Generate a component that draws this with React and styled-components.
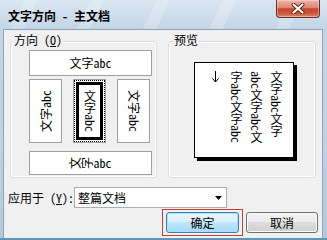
import React from 'react';
import styled, { createGlobalStyle, css } from 'styled-components';

const FONT = `"Noto Sans Mono CJK SC", "Noto Sans CJK SC", "DejaVu Sans", sans-serif`;

const Global = createGlobalStyle`
  html, body { margin: 0; padding: 0; }
  body { width: 327px; height: 240px; overflow: hidden; background: #1b2a38; font-family: ${FONT}; }
  * { box-sizing: border-box; }
`;

const Window = styled.div`
  width: 327px;
  height: 240px;
  display: flex;
  flex-direction: column;
  overflow: hidden;
  background: linear-gradient(180deg, #dae6f1 0%, #c3d5e6 29px, #bfd1e3 60%, #b4c9dd calc(100% - 2px), #5f97b6 calc(100% - 2px));
`;

const TitleBar = styled.div`
  flex: 0 0 29px;
  display: flex;
  align-items: flex-start;
  background: repeating-linear-gradient(115deg, rgba(255,255,255,0) 0 22px, rgba(255,255,255,0.22) 22px 34px, rgba(255,255,255,0) 34px 60px);
`;

const Title = styled.div`
  margin: 9px 0 0 8px;
  font-weight: bold;
  font-size: 12px;
  line-height: 14px;
  color: #000;
  white-space: pre;
`;

const CloseButton = styled.div`
  margin-left: auto;
  margin-right: 7px;
  width: 44px;
  height: 18px;
  border: 1px solid #6e2b22;
  border-top: none;
  border-radius: 0 0 4px 4px;
  background: linear-gradient(180deg, #ebb6aa 0%, #dd8472 45%, #c4452a 52%, #cc5a3e 80%, #dc8a6c 100%);
  box-shadow: inset 0 0 0 1px rgba(255,255,255,0.35);
  display: flex;
  align-items: center;
  justify-content: center;
`;

const Client = styled.div`
  flex: 1;
  margin: 0 4px 2px 3px;
  background: #f0f0f0;
  box-shadow: inset 1px 1px 0 #8ea3b7, inset -1px 0 0 #8ea3b7;
  padding: 12px 5px 2px 5px;
  display: flex;
  flex-direction: column;
  font-size: 12px;
  line-height: 14px;
  color: #000;
`;

const GroupsRow = styled.div`
  display: flex;
  gap: 11px;
  padding-left: 2px;
  height: 137px;
`;

const Group = styled.div`
  position: relative;
  width: ${p => p.$w}px;
  height: 137px;
  border: 1px solid #d5dfe5;
  border-radius: 3px;
  box-shadow: inset 0 0 0 1px #fff;
  padding: ${p => p.$pad};
  display: flex;
  flex-direction: column;
`;

const Legend = styled.div`
  position: absolute;
  top: -9px;
  left: ${p => p.$x}px;
  padding: 0 1px;
  background: #f0f0f0;
  white-space: nowrap;
`;

const Key = styled.span`
  text-decoration: underline;
`;

const Option = styled.div`
  position: relative;
  width: ${p => p.$w}px;
  height: ${p => p.$h}px;
  margin-top: ${p => p.$mt || 0}px;
  border: 1px solid #a0a0a0;
  background: #fff;
  display: flex;
  align-items: center;
  justify-content: center;
  font-size: 12px;
  line-height: 14px;
  white-space: nowrap;
  ${p => p.$selected && css`
    &::before {
      content: '';
      position: absolute;
      inset: 0;
      border: 1px dotted #000;
    }
    &::after {
      content: '';
      position: absolute;
      inset: 2px;
      border: 3px solid #000;
    }
  `}
`;

const OptionRow = styled.div`
  width: 121px;
  height: 64px;
  margin-top: 3px;
  display: flex;
  justify-content: space-between;
`;

const VText = styled.span`
  writing-mode: vertical-rl;
  text-orientation: ${p => (p.$mode === 'upright' ? 'mixed' : 'sideways')};
  transform: ${p => (p.$mode === 'up' ? 'rotate(180deg)' : 'none')};
  line-height: 14px;
`;

const TurnedChar = styled.span`
  display: inline-block;
  transform: rotate(-90deg);
`;

const Page = styled.div`
  width: 100px;
  height: 96px;
  border: 1px solid #000;
  background: #fff;
  box-shadow: 3px 3px 0 #000;
  padding: 8px 7px 0 0;
  display: flex;
  justify-content: flex-end;
`;

const PreviewText = styled.div`
  writing-mode: vertical-rl;
  text-orientation: mixed;
  font-size: 12px;
  line-height: 20px;
  white-space: nowrap;
`;

const Column = styled.div``;

const ArrowColumn = styled.div`
  display: flex;
  align-items: center;
  block-size: 18px;
  margin-block-start: 1px;
  padding-block-start: 1px;
`;

const ApplyRow = styled.div`
  margin-top: 9px;
  height: 21px;
  display: flex;
  align-items: center;
`;

const ApplyLabel = styled.div`
  width: 66px;
  white-space: nowrap;
`;

const Combo = styled.div`
  width: 153px;
  height: 21px;
  border: 1px solid #a9afb8;
  background: #fff;
  padding: 0 4px 0 3px;
  display: flex;
  align-items: center;
  justify-content: space-between;
`;

const ButtonRow = styled.div`
  margin-top: 1px;
  display: flex;
  justify-content: flex-end;
  align-items: center;
  gap: 3px;
`;

const FocusMark = styled.div`
  border: 1px solid #cc3b3b;
  padding: 2px 3px;
`;

const DialogButton = styled.div`
  width: ${p => p.$w}px;
  height: 21px;
  border-radius: 3px;
  display: flex;
  align-items: center;
  justify-content: center;
  font-size: 12px;
  line-height: 14px;
  ${p => p.$default ? css`
    border: 1px solid #3c7fb1;
    background: linear-gradient(180deg, #eaf6fd 0%, #d9f0fc 48%, #bee6fd 50%, #a7d9f5 100%);
    box-shadow: inset 0 0 0 1px #a6e3fb;
  ` : css`
    border: 1px solid #707070;
    background: linear-gradient(180deg, #f2f2f2 0%, #ebebeb 48%, #dddddd 50%, #cfcfcf 100%);
    box-shadow: inset 0 0 0 1px #fbfbfb;
  `}
`;

const CloseGlyph = () => (
  <svg width="14" height="11" viewBox="0 0 14 11">
    <path d="M2.5 1.5 L11.5 9.5 M11.5 1.5 L2.5 9.5" stroke="#5a2218" strokeWidth="4" strokeLinecap="round" />
    <path d="M2.5 1.5 L11.5 9.5 M11.5 1.5 L2.5 9.5" stroke="#fff" strokeWidth="2.2" strokeLinecap="round" />
  </svg>
);

const DownArrow = () => (
  <svg width="7" height="12" viewBox="0 0 7 12">
    <path d="M3.5 0 V11 M0.5 7.5 L3.5 11 L6.5 7.5" stroke="#000" strokeWidth="1" fill="none" />
  </svg>
);

const ComboArrow = () => (
  <svg width="7" height="4" viewBox="0 0 7 4">
    <polygon points="0,0 7,0 3.5,4" fill="#000" />
  </svg>
);

export default function App() {
  return (
    <>
      <Global />
      <Window>
        <TitleBar>
          <Title>文字方向 - 主文档</Title>
          <CloseButton><CloseGlyph /></CloseButton>
        </TitleBar>
        <Client>
          <GroupsRow>
            <Group $w={147} $pad="8px 0 0 18px">
              <Legend $x={2}>方向 (<Key>O</Key>)</Legend>
              <Option $w={123} $h={26}>文字abc</Option>
              <OptionRow>
                <Option $w={33} $h={64}><VText $mode="up">文字abc</VText></Option>
                <Option $w={33} $h={64} $selected><VText $mode="upright">文字abc</VText></Option>
                <Option $w={33} $h={64}><VText $mode="down">文字abc</VText></Option>
              </OptionRow>
              <Option $w={123} $h={24} $mt={8}>
                <span><TurnedChar>文</TurnedChar><TurnedChar>字</TurnedChar>abc</span>
              </Option>
            </Group>
            <Group $w={148} $pad="20px 0 0 25px">
              <Legend $x={4}>预览</Legend>
              <Page>
                <PreviewText>
                  <Column>文字abc文字</Column>
                  <Column>abc文字abc文</Column>
                  <Column>字abc文字abc</Column>
                  <ArrowColumn><DownArrow /></ArrowColumn>
                </PreviewText>
              </Page>
            </Group>
          </GroupsRow>
          <ApplyRow>
            <ApplyLabel>应用于 (<Key>Y</Key>):</ApplyLabel>
            <Combo>
              <span>整篇文档</span>
              <ComboArrow />
            </Combo>
          </ApplyRow>
          <ButtonRow>
            <FocusMark>
              <DialogButton $w={73} $default>确定</DialogButton>
            </FocusMark>
            <DialogButton $w={72}>取消</DialogButton>
          </ButtonRow>
        </Client>
      </Window>
    </>
  );
}
